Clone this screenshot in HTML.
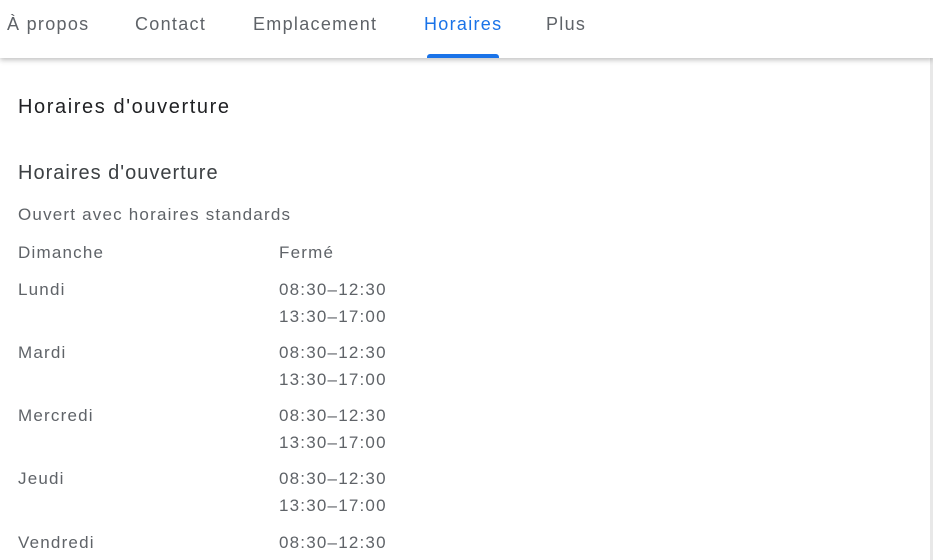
<!DOCTYPE html>
<html><head><meta charset="utf-8"><style>
body{margin:0;width:933px;height:560px;overflow:hidden;background:#fff;font-family:"Liberation Sans",Arial,sans-serif;position:relative}
.nav{position:absolute;left:0;top:0;width:933px;height:58px;background:#fff;box-shadow:0 2px 5px rgba(0,0,0,.25);z-index:2}
.nav span{position:absolute;top:14px;font-size:18px;color:#5f6368;letter-spacing:1.3px}
.nav .a{color:#1a73e8}
.bar{position:absolute;left:427px;top:54px;width:72px;height:4px;background:#1a73e8;border-radius:3px 3px 0 0}
.edge{position:absolute;right:0;top:58px;width:3px;height:502px;background:#e8e8e8}
.t{position:absolute;left:18px;color:#5f6368;font-size:17px;letter-spacing:1.2px}
.h{letter-spacing:1.6px}
</style></head><body>
<div class="nav">
<span style="left:7px">À propos</span>
<span style="left:135px">Contact</span>
<span style="left:253px">Emplacement</span>
<span class="a" style="left:424px">Horaires</span>
<span style="left:546px">Plus</span>
<div class="bar"></div>
</div>
<div class="edge"></div>
<div class="t h" style="top:96px;font-size:20px;color:#202124">Horaires d'ouverture</div>
<div class="t" style="top:162px;font-size:20px;color:#3c4043;letter-spacing:1px">Horaires d'ouverture</div>
<div class="t" style="top:205px">Ouvert avec horaires standards</div>
<div class="t" style="top:243px">Dimanche</div><div class="t" style="top:243px;left:279px">Fermé</div>
<div class="t" style="top:280px">Lundi</div><div class="t" style="top:280px;left:279px">08:30–12:30</div><div class="t" style="top:307px;left:279px">13:30–17:00</div>
<div class="t" style="top:343px">Mardi</div><div class="t" style="top:343px;left:279px">08:30–12:30</div><div class="t" style="top:370px;left:279px">13:30–17:00</div>
<div class="t" style="top:406px">Mercredi</div><div class="t" style="top:406px;left:279px">08:30–12:30</div><div class="t" style="top:433px;left:279px">13:30–17:00</div>
<div class="t" style="top:469px">Jeudi</div><div class="t" style="top:469px;left:279px">08:30–12:30</div><div class="t" style="top:496px;left:279px">13:30–17:00</div>
<div class="t" style="top:533px">Vendredi</div><div class="t" style="top:533px;left:279px">08:30–12:30</div>
</body></html>
